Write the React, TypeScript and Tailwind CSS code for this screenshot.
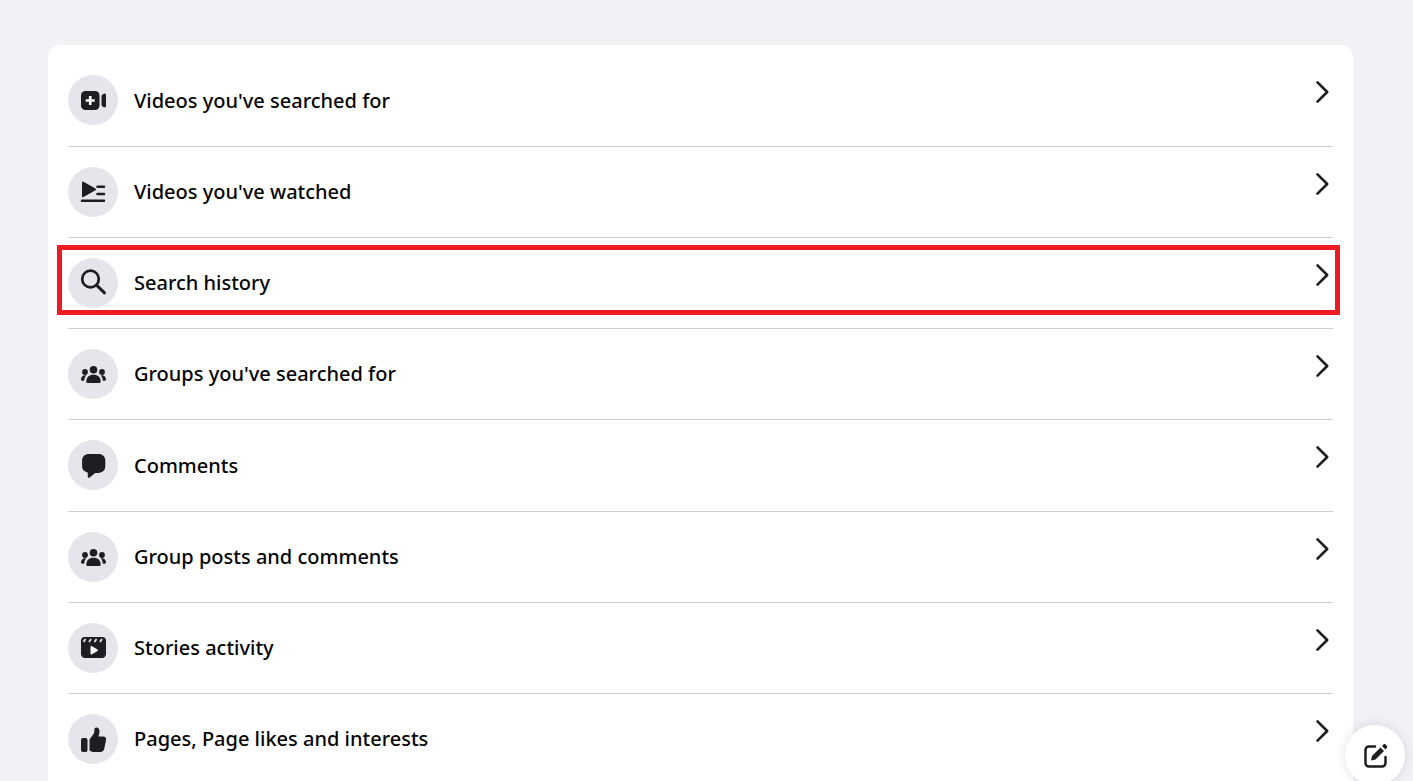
const ink = "#1c1e21";

const VideoPlus = () => (
  <>
    <rect x="13" y="16" width="18.500" height="19" rx="4.500" fill={ink} />
    <path d="M22.200 21v9M17.700 25.500h9" stroke="#fff" strokeWidth="2.600" />
    <path d="M33.500 21.500c0-1 .6-1.700 1.400-2.200l1-.6c1-.5 2.100.2 2.100 1.300v11c0 1.100-1.100 1.800-2.100 1.300l-1-.6c-.8-.5-1.400-1.200-1.400-2.200z" fill={ink} />
  </>
);
const PlayList = () => (
  <>
    <path d="M14 15.500c0-.8.800-1.200 1.500-.8l12 6.800c.7.400.7 1.300 0 1.700l-12 6.800c-.7.400-1.500 0-1.500-.8z" fill={ink} />
    <path d="M29.500 19.800h6.500M29.500 27h6.500M14 33.800h22" stroke={ink} strokeWidth="2.500" strokeLinecap="round" />
  </>
);
const Search = () => (
  <>
    <circle cx="22.500" cy="21" r="8.300" fill="none" stroke={ink} strokeWidth="2.700" />
    <path d="M28.500 27.200l8 7.600" stroke={ink} strokeWidth="3" strokeLinecap="round" />
  </>
);
const Groups = () => (
  <>
    <circle cx="25.500" cy="20.800" r="3.800" fill={ink} />
    <circle cx="17" cy="23" r="2.900" fill={ink} />
    <circle cx="34" cy="23" r="2.900" fill={ink} />
    <path d="M18.300 32.500c0-4 2.800-6.700 7.200-6.700s7.200 2.700 7.200 6.700c0 1-.8 1.500-1.700 1.500H20c-.9 0-1.700-.5-1.700-1.500z" fill={ink} />
    <path d="M13 30.500c0-2.400 1.600-4.300 4-4.300.5 0 .9.100 1.200.2-1.200 1.400-1.900 3.200-2 5.100-.9.300-3.200.5-3.200-1zM38 30.500c0-2.400-1.600-4.300-4-4.300-.5 0-.9.100-1.200.2 1.200 1.400 1.900 3.200 2 5.100.9.300 3.200.5 3.200-1z" fill={ink} />
  </>
);
const Comment = () => (
  <path d="M21 14h9.500c4 0 6.800 2.600 6.800 6.300v6.300c0 3.700-2.800 6.300-6.800 6.300h-3.200l-5.600 4.600c-.8.700-1.900.2-1.900-.8v-4.200c-3.500-.8-5.700-3.200-5.700-6v-6.200c0-3.700 2.900-6.300 6.900-6.300z" fill={ink} />
);
const Clapper = () => (
  <>
    <path d="M16.500 14h18c2 0 3.500 1.500 3.500 3.500V31c0 2.300-1.700 4-4 4H17c-2.300 0-4-1.700-4-4V17.500c0-2 1.500-3.500 3.500-3.500z" fill={ink} />
    <path d="M15.500 19l2-3M21 19l2-3M26.500 19l2-3M32 19l2-3" stroke="#e4e6eb" strokeWidth="1.800" />
    <path d="M22.500 23.800c0-.6.600-1 1.100-.7l6 3.500c.5.300.5 1 0 1.300l-6 3.500c-.5.300-1.100-.1-1.100-.7z" fill="#fff" />
  </>
);
const Thumb = () => (
  <>
    <rect x="13" y="24" width="6.500" height="14" rx="2" fill={ink} />
    <path d="M21.500 25.500l4-5.500c.6-.9.900-1.900.9-3v-1.700c0-1 .8-1.800 1.800-1.800 2 0 3.300 1.700 3.300 3.800 0 1.700-.4 3.500-1 5.200h4.800c1.900 0 3.200 1.500 2.800 3.300l-1.900 9.300c-.4 1.700-1.700 2.900-3.500 2.900h-6.500c-2.100 0-3.700-.6-4.700-1.500z" fill={ink} />
  </>
);

const rows: [string, () => React.ReactElement][] = [
  ["Videos you've searched for", VideoPlus],
  ["Videos you've watched", PlayList],
  ["Search history", Search],
  ["Groups you've searched for", Groups],
  ["Comments", Comment],
  ["Group posts and comments", Groups],
  ["Stories activity", Clapper],
  ["Pages, Page likes and interests", Thumb],
];

export default function App() {
  return (
    <div
      className="relative h-[781px] overflow-hidden bg-[#f0f2f5] pt-[45px] pr-[60px] pl-[48px]"
      style={{ fontFamily: '"Noto Sans", sans-serif' }}
    >
      <div className="rounded-xl bg-white px-5 pt-[10.35px] pb-5">
        {rows.map(([label, Icon]) => (
          <div
            key={label}
            className="flex h-[91.25px] items-center border-b border-[#ced0d4] last:border-b-transparent"
          >
            <div className="flex h-[50px] w-[50px] shrink-0 items-center justify-center rounded-full bg-[#e4e6eb]">
              <svg width="50" height="50" viewBox="0 0 50 50">
                <Icon />
              </svg>
            </div>
            <span className="ml-4 flex-1 pt-[0.5px] text-[20px] font-medium text-[#050505]">{label}</span>
            <svg width="24" height="28" viewBox="0 0 24 28" className="mb-4 mr-[-1px]">
              <path
                d="M7.500 4.300l9.700 9.700-9.700 9.700"
                fill="none"
                stroke={ink}
                strokeWidth="2.600"
                strokeLinecap="round"
                strokeLinejoin="round"
              />
            </svg>
          </div>
        ))}
      </div>

      <div className="absolute top-[245px] left-[57px] h-[70px] w-[1283px] border-[5px] border-[#ed1c24]" />

      <div className="absolute top-[725px] left-[1345px] flex h-[60px] w-[60px] items-center justify-center rounded-full bg-white shadow-[0_0_12px_rgba(0,0,0,0.12)]">
        <svg width="28" height="28" viewBox="0 0 28 28" className="ml-[1px]">
          <path
            d="M13 5.500H7c-2 0-3.500 1.500-3.500 3.500v13c0 2 1.500 3.500 3.500 3.500h13c2 0 3.500-1.500 3.500-3.500v-6"
            fill="none"
            stroke={ink}
            strokeWidth="2.500"
            strokeLinecap="round"
          />
          <path d="M9 19.500l1-4.500 8.500-8.500 3.500 3.500-8.500 8.500z" fill={ink} />
          <path d="M20 5l1.500-1.500c.6-.6 1.400-.6 2 0l1.300 1.300c.6.600.6 1.400 0 2L23.500 8.500z" fill={ink} />
        </svg>
      </div>
    </div>
  );
}
